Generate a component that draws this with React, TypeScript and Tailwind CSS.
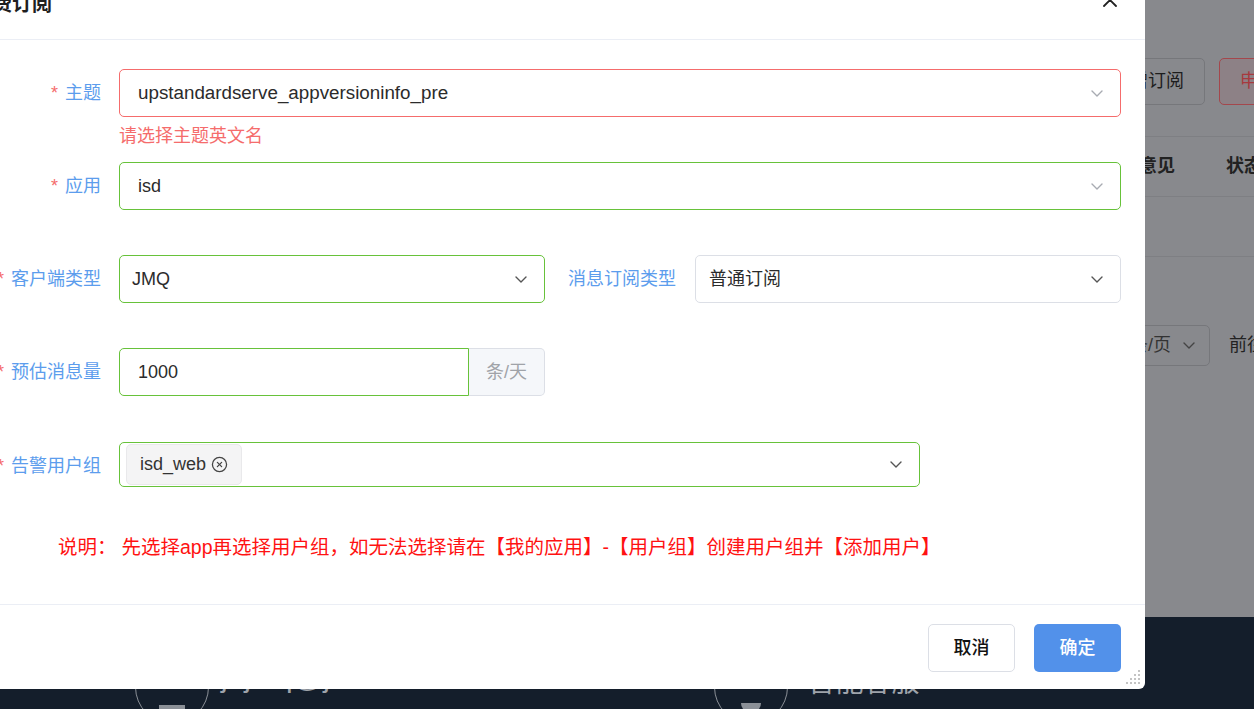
import React from "react";
import { CircleX } from "lucide-react";

const Chevron = ({ className }: { className: string }) => (
  <svg width="12" height="7" viewBox="0 0 12 7" fill="none" className={className}>
    <path d="M1 1l5 5 5-5" stroke="currentColor" strokeWidth="1.4" strokeLinecap="round" strokeLinejoin="round" />
  </svg>
);

const Label = ({ text, className }: { text: string; className: string }) => (
  <div className={`shrink-0 flex items-center justify-end h-[48px] text-[18px] text-[#5c9ded] ${className}`}>
    <span className="text-[#f56c6c] mr-[7px]">*</span>
    {text}
  </div>
);

const Grip = () => (
  <svg width="16" height="16" viewBox="0 0 16 16" className="text-[#c4c4c4]">
    {[
      [13, 1],
      [13, 5],
      [9, 5],
      [13, 9],
      [9, 9],
      [5, 9],
      [13, 13],
      [9, 13],
      [5, 13],
      [1, 13],
    ].map(([x, y], i) => (
      <rect key={i} x={x} y={y} width="2" height="2" fill="currentColor" />
    ))}
  </svg>
);

const App = () => {
  return (
    <div className="relative w-[1254px] h-[709px] overflow-hidden bg-[#88898d] font-['Liberation_Sans','Noto_Sans_CJK_SC',sans-serif]">
      {/* page behind the dialog */}
      <div className="flex flex-col h-full">
        <div className="flex-1 pl-[1089px]">
          <div className="flex gap-[14px] pt-[58px]">
            <div className="shrink-0 h-[47px] pl-[22px] pr-[20px] flex items-center border border-[#76777b] rounded-[5px] text-[18px] text-[#1d1d1d]">
              新增订阅
            </div>
            <div className="shrink-0 h-[47px] px-[20px] flex items-center border border-[#a4474c] bg-[#8d8186] rounded-[5px] text-[18px] text-[#a8393e]">
              申请订阅
            </div>
          </div>
          <div className="mt-[31px] w-[400px] h-[61px] border-y border-[#7e7f83] flex items-center text-[18px] font-bold text-[#222]">
            <span className="ml-[50px] w-[87px] shrink-0">意见</span>
            <span className="shrink-0">状态</span>
          </div>
          <div className="w-[400px] h-[60px] border-b border-[#7e7f83]" />
          <div className="mt-[68px] flex items-center">
            <div className="shrink-0 w-[121px] h-[41px] border border-[#76777b] rounded-[5px] flex items-center justify-end pr-[14px] gap-[12px] text-[18px] text-[#333]">
              10条/页
              <Chevron className="text-[#444]" />
            </div>
            <span className="ml-[19px] shrink-0 text-[18px] text-[#222]">前往</span>
          </div>
        </div>
        <div className="h-[92px] bg-[#141e2b] flex items-start pt-[33px] pl-[135px]">
          <div className="shrink-0 w-[74px] h-[74px] rounded-full border-[1.5px] border-[#8b9097] flex items-end justify-center pb-[12px]">
            <div className="w-[26px] h-[6px] bg-[#8b9097]" />
          </div>
          <span className="ml-[12px] mt-[4px] text-[30px] text-[#9ea3aa] shrink-0">jdjmq@jd.com</span>
          <div className="ml-[302px] shrink-0 w-[74px] h-[74px] rounded-full border-[1.5px] border-[#8b9097] flex items-end justify-center pb-[10px]">
            <div className="w-[20px] h-[10px] rounded-b-full bg-[#8b9097]" />
          </div>
          <span className="ml-[20px] mt-[12px] text-[28px] text-[#9ea3aa] shrink-0">智能客服</span>
        </div>
      </div>

      {/* dialog */}
      <div className="absolute left-[-48px] top-[-20px] w-[1193px] h-[709px] bg-white rounded-[6px] flex flex-col">
        <div className="h-[60px] shrink-0 border-b border-[#ebeef5] flex justify-between items-start pl-[20px] pr-[28px]">
          <span className="pt-[12px] text-[20px] leading-[24px] font-bold text-[#1f1f1f]">消费订阅</span>
          <svg width="14" height="14" viewBox="0 0 14 14" className="mt-[13px]">
            <path d="M1 1l12 12M13 1L1 13" stroke="#222" strokeWidth="1.8" strokeLinecap="round" />
          </svg>
        </div>

        <div className="flex-1 pl-[25px] pt-[29px] text-[18px] text-[#2b2b2b]">
          <div className="flex">
            <Label text="主题" className="w-[142px] pr-[18px]" />
            <div className="flex flex-col">
              <div className="w-[1002px] h-[48px] border border-[#f56c6c] rounded-[5px] flex items-center justify-between pl-[18px] pr-[17px] text-[18.8px]">
                upstandardserve_appversioninfo_pre
                <Chevron className="text-[#a8abb2]" />
              </div>
              <div className="pt-[7px] pb-[14px] leading-[24px] text-[#f56c6c]">请选择主题英文名</div>
            </div>
          </div>

          <div className="flex mb-[45px]">
            <Label text="应用" className="w-[142px] pr-[18px]" />
            <div className="w-[1002px] h-[48px] border border-[#67c23a] rounded-[5px] flex items-center justify-between pl-[18px] pr-[17px]">
              isd
              <Chevron className="text-[#a8abb2]" />
            </div>
          </div>

          <div className="flex mb-[45px]">
            <Label text="客户端类型" className="w-[142px] pr-[18px]" />
            <div className="w-[426px] h-[48px] border border-[#67c23a] rounded-[5px] flex items-center justify-between pl-[12px] pr-[17px]">
              JMQ
              <Chevron className="text-[#555]" />
            </div>
            <div className="w-[150px] shrink-0 h-[48px] flex items-center justify-end pr-[19px] text-[#5c9ded]">消息订阅类型</div>
            <div className="w-[426px] h-[48px] border border-[#dcdfe6] rounded-[5px] flex items-center justify-between pl-[13px] pr-[17px]">
              普通订阅
              <Chevron className="text-[#555]" />
            </div>
          </div>

          <div className="flex mb-[46px]">
            <Label text="预估消息量" className="w-[142px] pr-[18px]" />
            <div className="w-[350px] h-[48px] border border-[#67c23a] rounded-l-[5px] flex items-center pl-[18px]">1000</div>
            <div className="w-[76px] h-[48px] border border-l-0 border-[#dcdfe6] rounded-r-[5px] bg-[#f5f7fa] flex items-center justify-center text-[#a0a3a8]">
              条/天
            </div>
          </div>

          <div className="flex">
            <Label text="告警用户组" className="w-[142px] pr-[18px] h-[45px]" />
            <div className="w-[801px] h-[45px] border border-[#67c23a] rounded-[5px] flex items-center justify-between pl-[6px] pr-[17px]">
              <div className="h-[41px] bg-[#f4f4f5] border border-[#e9e9eb] rounded-[5px] flex items-center pl-[13px] pr-[13px] gap-[5px] text-[#333]">
                isd_web
                <CircleX size={17} strokeWidth={1.8} className="text-[#444]" />
              </div>
              <Chevron className="text-[#555]" />
            </div>
          </div>

          <div className="mt-[44px] ml-[81px] leading-[26px] text-[19.5px] text-[#ff1212]">
            说明：<span className="ml-[5px]">先选择app再选择用户组，如无法选择请在【我的应用】-【用户组】创建用户组并【添加用户】</span>
          </div>
        </div>

        <div className="relative h-[85px] shrink-0 border-t border-[#ebeef5] flex justify-end items-start pt-[19px] pr-[24px] gap-[19px]">
          <button className="w-[87px] h-[48px] border border-[#dcdfe6] rounded-[5px] bg-white text-[18px] font-medium text-[#111]">
            取消
          </button>
          <button className="w-[87px] h-[48px] rounded-[5px] bg-[#5291ea] text-[18px] font-medium text-white">
            确定
          </button>
          <div className="absolute right-[4px] bottom-[4px]">
            <Grip />
          </div>
        </div>
      </div>
    </div>
  );
};

export default App;
